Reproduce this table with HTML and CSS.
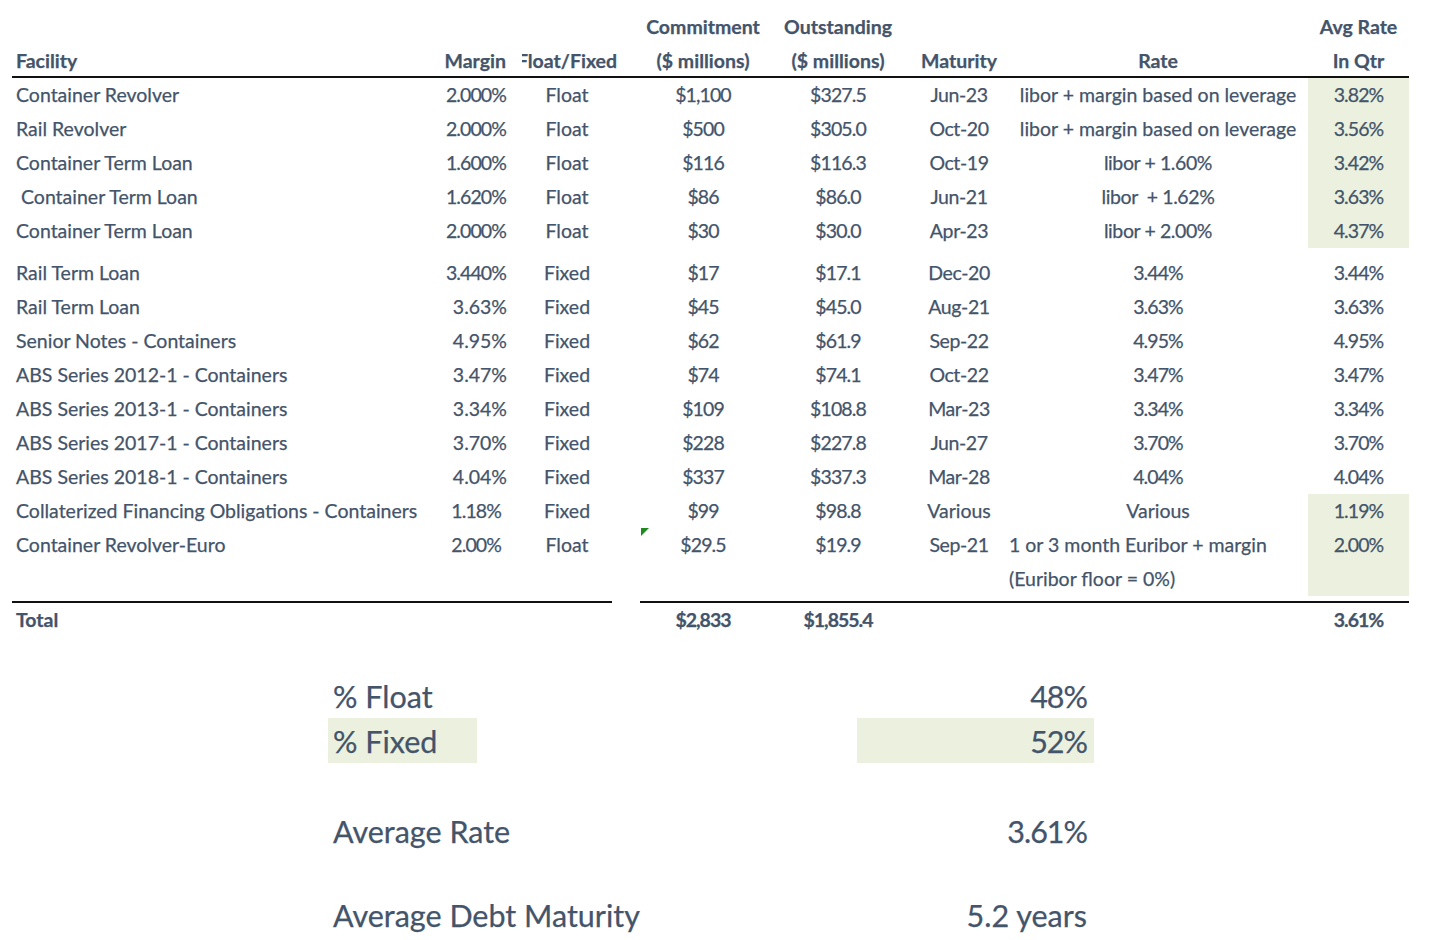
FILE: index.html
```html
<!DOCTYPE html>
<html>
<head>
<meta charset="utf-8">
<title>Debt Facilities</title>
<link rel="stylesheet" href="styles.css">
</head>
<body>
<table class="debt">
<colgroup>
<col class="c-fac"><col class="c-mar"><col class="c-ff"><col class="c-gap"><col class="c-com"><col class="c-out"><col class="c-mat"><col class="c-rate"><col class="c-avg">
</colgroup>
<thead>
<tr>
<th class="l"><span class="h">Facility</span></th>
<th class="r"><span class="h">Margin</span></th>
<th class="ff"><div class="clip h"><span>Float/Fixed</span></div></th>
<th></th>
<th><span class="h">Commitment<br>($ millions)</span></th>
<th><span class="h">Outstanding<br>($ millions)</span></th>
<th><span class="h">Maturity</span></th>
<th><span class="h">Rate</span></th>
<th><span class="h">Avg Rate<br>In Qtr</span></th>
</tr>
</thead>
<tbody>
<tr><td class="l">Container Revolver</td><td class="r">2.000%</td><td class="t">Float</td><td></td><td>$1,100</td><td>$327.5</td><td class="m">Jun-23</td><td class="t">libor + margin based on leverage</td><td class="hl">3.82%</td></tr>
<tr><td class="l">Rail Revolver</td><td class="r">2.000%</td><td class="t">Float</td><td></td><td>$500</td><td>$305.0</td><td class="m">Oct-20</td><td class="t">libor + margin based on leverage</td><td class="hl">3.56%</td></tr>
<tr><td class="l">Container Term Loan</td><td class="r">1.600%</td><td class="t">Float</td><td></td><td>$116</td><td>$116.3</td><td class="m">Oct-19</td><td class="m">libor + 1.60%</td><td class="hl">3.42%</td></tr>
<tr><td class="l"> Container Term Loan</td><td class="r">1.620%</td><td class="t">Float</td><td></td><td>$86</td><td>$86.0</td><td class="m">Jun-21</td><td class="m">libor  + 1.62%</td><td class="hl">3.63%</td></tr>
<tr><td class="l">Container Term Loan</td><td class="r">2.000%</td><td class="t">Float</td><td></td><td>$30</td><td>$30.0</td><td class="m">Apr-23</td><td class="m">libor + 2.00%</td><td class="hl">4.37%</td></tr>
<tr class="sp8"><td colspan="9"></td></tr>
<tr><td class="l">Rail Term Loan</td><td class="r">3.440%</td><td class="t">Fixed</td><td></td><td>$17</td><td>$17.1</td><td class="m">Dec-20</td><td>3.44%</td><td>3.44%</td></tr>
<tr><td class="l">Rail Term Loan</td><td class="r r3">3.63%</td><td class="t">Fixed</td><td></td><td>$45</td><td>$45.0</td><td class="m">Aug-21</td><td>3.63%</td><td>3.63%</td></tr>
<tr><td class="l">Senior Notes - Containers</td><td class="r r3">4.95%</td><td class="t">Fixed</td><td></td><td>$62</td><td>$61.9</td><td class="m">Sep-22</td><td>4.95%</td><td>4.95%</td></tr>
<tr><td class="l">ABS Series 2012-1 - Containers</td><td class="r r3">3.47%</td><td class="t">Fixed</td><td></td><td>$74</td><td>$74.1</td><td class="m">Oct-22</td><td>3.47%</td><td>3.47%</td></tr>
<tr><td class="l">ABS Series 2013-1 - Containers</td><td class="r r3">3.34%</td><td class="t">Fixed</td><td></td><td>$109</td><td>$108.8</td><td class="m">Mar-23</td><td>3.34%</td><td>3.34%</td></tr>
<tr><td class="l">ABS Series 2017-1 - Containers</td><td class="r r3">3.70%</td><td class="t">Fixed</td><td></td><td>$228</td><td>$227.8</td><td class="m">Jun-27</td><td>3.70%</td><td>3.70%</td></tr>
<tr><td class="l">ABS Series 2018-1 - Containers</td><td class="r r3">4.04%</td><td class="t">Fixed</td><td></td><td>$337</td><td>$337.3</td><td class="m">Mar-28</td><td>4.04%</td><td>4.04%</td></tr>
<tr><td class="l">Collaterized Financing Obligations - Containers</td><td class="r r2">1.18%</td><td class="t">Fixed</td><td></td><td>$99</td><td>$98.8</td><td class="t">Various</td><td class="t">Various</td><td class="hl">1.19%</td></tr>
<tr><td class="l">Container Revolver-Euro</td><td class="r r2">2.00%</td><td class="t">Float</td><td></td><td class="flag">$29.5</td><td>$19.9</td><td class="m">Sep-21</td><td class="wrap">1 or 3 month Euribor + margin<br>(Euribor floor = 0%)</td><td class="hl">2.00%</td></tr>
<tr class="sp5"><td colspan="9"></td></tr>
<tr class="total"><td class="l">Total</td><td></td><td></td><td class="nob"></td><td>$2,833</td><td>$1,855.4</td><td></td><td></td><td>3.61%</td></tr>
</tbody>
</table>

<div class="summary">
  <div class="srow"><div class="lab">% Float</div><div class="mid"></div><div class="val">48%</div></div>
  <div class="srow"><div class="lab hl">% Fixed</div><div class="mid"></div><div class="val hl">52%</div></div>
  <div class="srow"></div>
  <div class="srow"><div class="lab">Average Rate</div><div class="mid"></div><div class="val">3.61%</div></div>
  <div class="srow short"></div>
  <div class="srow"><div class="lab">Average Debt Maturity</div><div class="mid"></div><div class="val txt">5.2 years</div></div>
</div>
</body>
</html>
```
FILE: styles.css
```css
html, body {
  margin: 0;
  padding: 0;
  background: #ffffff;
}

body {
  font-family: Lato, "Liberation Sans", sans-serif;
  color: #44546A;
  -webkit-text-stroke: 0.25px #44546A;
}

.debt {
  margin-left: 12px;
  width: 1397px;
  table-layout: fixed;
  border-collapse: separate;
  border-spacing: 0;
  font-size: 19.5px;
}

.c-fac { width: 428px; }
.c-mar { width: 82px; }
.c-ff { width: 90px; }
.c-gap { width: 28px; }
.c-com { width: 126px; }
.c-out { width: 144px; }
.c-mat { width: 98px; }
.c-rate { width: 300px; }
.c-avg { width: 101px; }

.debt th {
  height: 76px;
  padding: 0;
  vertical-align: bottom;
  line-height: 34px;
  font-weight: 700;
  text-align: center;
  white-space: nowrap;
  border-bottom: 2px solid #111;
}

.debt th .h {
  position: relative;
  top: 2px;
}

.debt th span.h {
  display: inline-block;
}

.debt td {
  height: 34px;
  padding: 0;
  line-height: 34px;
  text-align: center;
  vertical-align: top;
  white-space: pre;
  letter-spacing: -0.9px;
}

.debt td.t,
.debt td.wrap {
  letter-spacing: 0;
}

.debt td.m {
  letter-spacing: -0.4px;
}

.debt .l {
  text-align: left;
  padding-left: 4px;
}

.debt td.l {
  letter-spacing: 0;
}

.debt .r {
  text-align: right;
  padding-right: 16px;
}

.debt td.r3 {
  letter-spacing: 0;
  padding-right: 15px;
}

.debt .r2 {
  padding-right: 21px;
}

.clip {
  display: flex;
  justify-content: center;
  clip-path: inset(-10px -60px -10px 0);
}

.clip span {
  flex: none;
}

.hl {
  background: #EBF1DE;
}

.debt tr.sp8 td {
  height: 8px;
  line-height: 0;
  font-size: 0;
}

.debt tr.sp5 td {
  height: 5px;
  line-height: 0;
  font-size: 0;
}

.debt td.wrap {
  text-align: left;
  padding-left: 1px;
  white-space: nowrap;
}

.debt td.flag {
  position: relative;
}

.debt td.flag::before {
  content: "";
  position: absolute;
  left: 1px;
  top: 0;
  width: 0;
  height: 0;
  border-top: 8px solid #1f8a1f;
  border-right: 8px solid transparent;
}

.debt tr.total td {
  font-weight: 700;
  border-top: 2px solid #111;
  letter-spacing: -1px;
}

.debt tr.total td.l {
  letter-spacing: 0;
}

.debt tr.total td.nob {
  border-top: 0;
}

.summary {
  margin-top: 36px;
  margin-left: 328px;
  font-size: 30.5px;
}

.srow {
  display: flex;
  height: 45px;
  line-height: 47px;
}

.srow.short {
  height: 39px;
}

.lab {
  width: 149px;
  padding-left: 5px;
  box-sizing: border-box;
  white-space: nowrap;
}

.mid {
  width: 380px;
}

.val {
  width: 237px;
  padding-right: 7px;
  box-sizing: border-box;
  text-align: right;
  white-space: nowrap;
  letter-spacing: -1px;
}

.val.txt {
  letter-spacing: 0;
}
```
